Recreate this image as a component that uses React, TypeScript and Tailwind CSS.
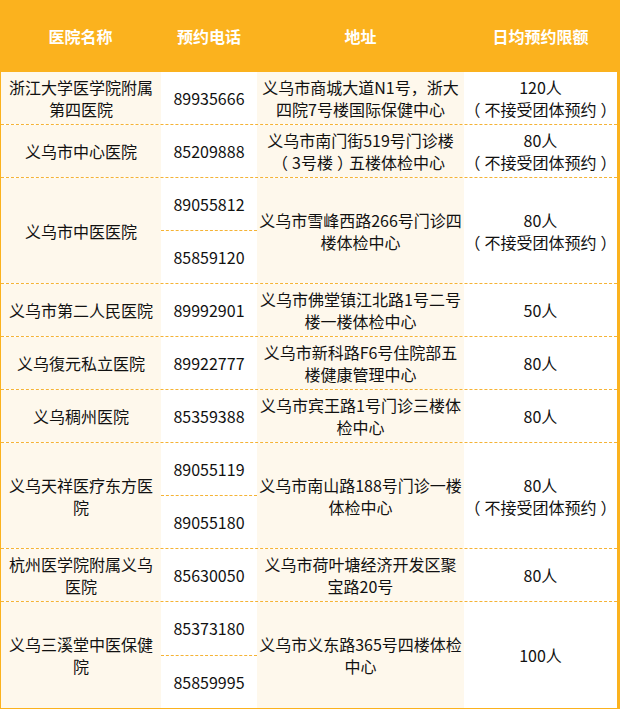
import React from "react"

type Row = {
  name: string[]
  phones: string[]
  addr: string[]
  quota: string
  note?: boolean
}

const rows: Row[] = [
  { name: ["浙江大学医学院附属", "第四医院"], phones: ["89935666"], addr: ["义乌市商城大道N1号，浙大", "四院7号楼国际保健中心"], quota: "120人", note: true },
  { name: ["义乌市中心医院"], phones: ["85209888"], addr: ["义乌市南门街519号门诊楼", "（3号楼）五楼体检中心"], quota: "80人", note: true },
  { name: ["义乌市中医医院"], phones: ["89055812", "85859120"], addr: ["义乌市雪峰西路266号门诊四", "楼体检中心"], quota: "80人", note: true },
  { name: ["义乌市第二人民医院"], phones: ["89992901"], addr: ["义乌市佛堂镇江北路1号二号", "楼一楼体检中心"], quota: "50人" },
  { name: ["义乌復元私立医院"], phones: ["89922777"], addr: ["义乌市新科路F6号住院部五", "楼健康管理中心"], quota: "80人" },
  { name: ["义乌稠州医院"], phones: ["85359388"], addr: ["义乌市宾王路1号门诊三楼体", "检中心"], quota: "80人" },
  { name: ["义乌天祥医疗东方医", "院"], phones: ["89055119", "89055180"], addr: ["义乌市南山路188号门诊一楼", "体检中心"], quota: "80人", note: true },
  { name: ["杭州医学院附属义乌", "医院"], phones: ["85630050"], addr: ["义乌市荷叶塘经济开发区聚", "宝路20号"], quota: "80人" },
  { name: ["义乌三溪堂中医保健", "院"], phones: ["85373180", "85859995"], addr: ["义乌市义东路365号四楼体检", "中心"], quota: "100人" },
]

// full-width brackets: half-width glyph centred in a one-em box, like the original font
function Text({ s }: { s: string }) {
  const parts = s.split(/([（）])/)
  return (
    <>
      {parts.map((p, i) =>
        p === "（" || p === "）" ? (
          <span key={i} className="inline-block w-[16px] text-center">
            <span className="[font-feature-settings:'halt']">{p}</span>
          </span>
        ) : (
          <React.Fragment key={i}>{p}</React.Fragment>
        )
      )}
    </>
  )
}

function Lines({ lines }: { lines: string[] }) {
  return (
    <div className="text-center">
      {lines.map((l, i) => (
        <div key={i} className="whitespace-nowrap">
          <Text s={l} />
        </div>
      ))}
    </div>
  )
}

export default function App() {
  return (
    <div
      className="w-[620px] bg-white text-[16px] leading-[22px] text-[#111]"
      style={{ fontFamily: '"Noto Sans CJK SC", "Noto Sans", sans-serif' }}
    >
      {/* Header */}
      <div className="flex h-[72px] bg-[#fbb21e] font-bold text-white">
        <div className="flex w-[161px] items-center justify-center">医院名称</div>
        <div className="flex w-[96px] items-center justify-center">预约电话</div>
        <div className="flex w-[207px] items-center justify-center">地址</div>
        <div className="flex w-[156px] items-center justify-center pr-[3px]">日均预约限额</div>
      </div>

      {/* Body */}
      <div className="border-b-2 border-l border-r-[3px] border-[#fbb21e]">
        {rows.map((r, i) => {
          const tall = r.phones.length > 1
          const last = i === rows.length - 1
          return (
            <div
              key={i}
              className={`flex ${tall ? "h-[106px]" : "h-[53px]"} ${last ? "h-[105px]" : "border-b border-dashed border-[#f5b335]"}`}
            >
              <div className="flex w-[160px] items-center justify-center bg-[#fef8ec] px-1">
                <Lines lines={r.name} />
              </div>
              <div className="flex w-[96px] flex-col bg-white">
                {r.phones.map((p, j) => (
                  <div
                    key={p}
                    className={`flex flex-1 items-center justify-center ${j < r.phones.length - 1 ? "border-b border-dashed border-[#f5b335]" : ""}`}
                  >
                    {p}
                  </div>
                ))}
              </div>
              <div className="flex w-[207px] items-center justify-center bg-[#fef8ec]">
                <Lines lines={r.addr} />
              </div>
              <div className="flex flex-1 items-center justify-center bg-white">
                <Lines lines={r.note ? [r.quota, "（不接受团体预约）"] : [r.quota]} />
              </div>
            </div>
          )
        })}
      </div>
    </div>
  )
}
